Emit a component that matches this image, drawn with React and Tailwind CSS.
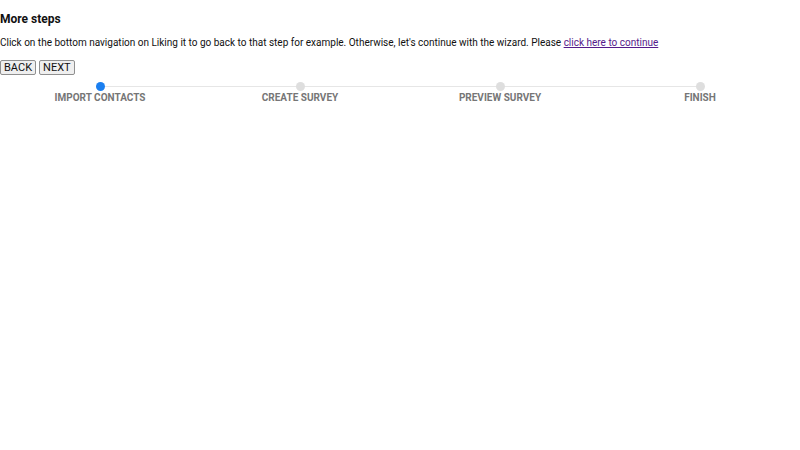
import React, { useState } from 'react';

const steps = ['IMPORT CONTACTS', 'CREATE SURVEY', 'PREVIEW SURVEY', 'FINISH'];

function Stepper({ active }) {
  return (
    <div className="relative flex">
      <div className="absolute left-[100px] right-[100px] top-[4px] h-px bg-[#e6e6e6]" />
      {steps.map((label, i) => (
        <div key={label} className="relative flex w-[200px] flex-col items-center">
          <div className={`h-[9px] w-[9px] rounded-full ${i === active ? 'bg-[#1a7ff0]' : 'bg-[#dedede]'}`} />
          <div className="mt-[1px] text-[10px] font-bold leading-[12px] text-[#767676]">{label}</div>
        </div>
      ))}
    </div>
  );
}

export default function App() {
  const [step, setStep] = useState(0);

  return (
    <div className="min-h-screen bg-white font-['Roboto',sans-serif] text-[#111]">
      <h2 className="pt-[12px] text-[12px] font-bold leading-[15px]">More steps</h2>
      <p className="mt-[10px] text-[10px] leading-[12px]">
        Click on the bottom navigation on Liking it to go back to that step for example. Otherwise, let's continue with the wizard. Please{' '}
        <a href="#" className="text-[#551a8b] underline">click here to continue</a>
      </p>
      <div className="mt-[11px] flex gap-[3px]">
        <button
          onClick={() => setStep(Math.max(0, step - 1))}
          className="border border-[#8f8f8f] bg-[#efefef] px-[3px] text-[11px] leading-[13px] rounded-[2px]"
        >
          BACK
        </button>
        <button
          onClick={() => setStep(Math.min(3, step + 1))}
          className="border border-[#8f8f8f] bg-[#efefef] px-[3px] text-[11px] leading-[13px] rounded-[2px]"
        >
          NEXT
        </button>
      </div>
      <div className="mt-[7px]">
        <Stepper active={step} />
      </div>
    </div>
  );
}
